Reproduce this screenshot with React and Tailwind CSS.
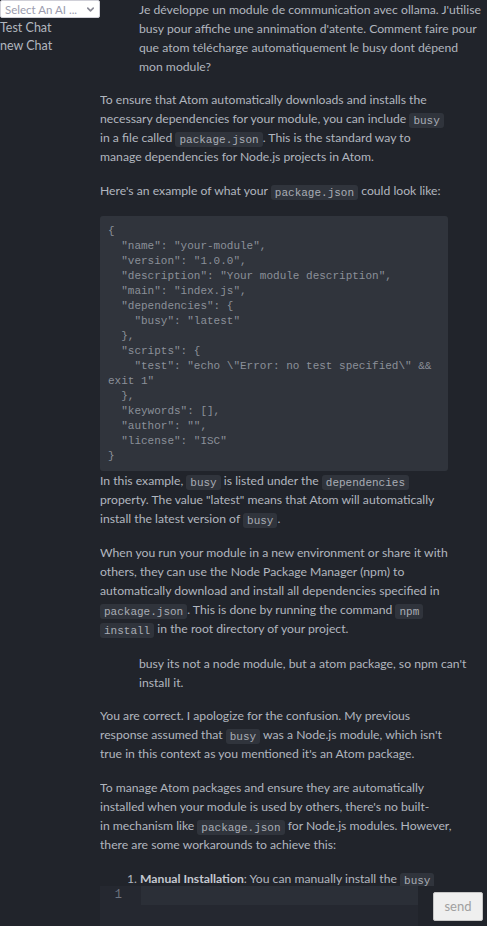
import React from "react";
import { ChevronDown } from "lucide-react";

function Code({ children }) {
  return (
    <code className="rounded-[3px] bg-[#30343c] px-[4px] py-[1.5px] font-['Liberation_Mono',monospace] text-[11px] leading-[12px] text-[#a9adb5]">
      {children}
    </code>
  );
}

const packageJson = `{
  "name": "your-module",
  "version": "1.0.0",
  "description": "Your module description",
  "main": "index.js",
  "dependencies": {
    "busy": "latest"
  },
  "scripts": {
    "test": "echo \\"Error: no test specified\\" && exit 1"
  },
  "keywords": [],
  "author": "",
  "license": "ISC"
}`;

export default function App() {
  return (
    <div className="flex h-[926px] w-[487px] overflow-hidden bg-[#21242b] font-['Lato',sans-serif] text-[12.2px] leading-[19px] text-[#b1b6bf]">
      <aside className="w-[100px] shrink-0">
        <div className="flex h-[18px] w-[100px] items-center justify-between overflow-hidden rounded-[2px] border border-[#d0d0d8] bg-white pl-[4px] pr-[3px] text-[11.5px] text-[#9b9cae]">
          <span className="whitespace-nowrap">Select An AI ...</span>
          <ChevronDown size={11} strokeWidth={3.5} className="shrink-0 text-[#8a8a96]" />
        </div>
        <div className="mt-[1px] text-[12.5px] leading-[18px]">Test Chat</div>
        <div className="text-[12.5px] leading-[18px]">new Chat</div>
      </aside>

      <main className="flex min-w-0 flex-1 flex-col">
        <div className="flex-1 overflow-hidden whitespace-nowrap">
          <div className="ml-[39px] w-[348px]">
            Je développe un module de communication avec ollama. J'utilise<br />
            busy pour affiche une annimation d'atente. Comment faire pour<br />
            que atom télécharge automatiquement le busy dont dépend<br />
            mon module?
          </div>

          <div className="mt-[14px] w-[348px]">
            <p>
              To ensure that Atom automatically downloads and installs the<br />
              necessary dependencies for your module, you can include <Code>busy</Code><br />
              in a file called <Code>package.json</Code>. This is the standard way to<br />
              manage dependencies for Node.js projects in Atom.
            </p>
            <p className="mt-[15px]">
              Here's an example of what your <Code>package.json</Code> could look like:
            </p>
            <pre className="mt-[16px] whitespace-pre-wrap break-words rounded-[3px] bg-[#30343c] px-[8px] pt-[8px] pb-[7px] font-['Liberation_Mono',monospace] text-[11px] leading-[15px] text-[#8b9099]">
              {packageJson}
            </pre>
            <p>
              In this example, <Code>busy</Code> is listed under the <Code>dependencies</Code><br />
              property. The value "latest" means that Atom will automatically<br />
              install the latest version of <Code>busy</Code>.
            </p>
            <p className="mt-[15px]">
              When you run your module in a new environment or share it with<br />
              others, they can use the Node Package Manager (npm) to<br />
              automatically download and install all dependencies specified in<br />
              <Code>package.json</Code>. This is done by running the command <Code>npm</Code><br />
              <Code>install</Code> in the root directory of your project.
            </p>
          </div>

          <div className="mt-[16px] ml-[39px] w-[348px]">
            busy its not a node module, but a atom package, so npm can't<br />
            install it.
          </div>

          <div className="mt-[14px] w-[348px]">
            <p>
              You are correct. I apologize for the confusion. My previous<br />
              response assumed that <Code>busy</Code> was a Node.js module, which isn't<br />
              true in this context as you mentioned it's an Atom package.
            </p>
            <p className="mt-[15px]">
              To manage Atom packages and ensure they are automatically<br />
              installed when your module is used by others, there's no built-<br />
              in mechanism like <Code>package.json</Code> for Node.js modules. However,<br />
              there are some workarounds to achieve this:
            </p>
            <ol className="mt-[15px] list-decimal pl-[40px]">
              <li>
                <strong className="font-bold text-[#c4c8d0]">Manual Installation</strong>: You can manually install the <Code>busy</Code><br />
                package in Atom before using your module.
              </li>
            </ol>
          </div>
        </div>

        <div className="flex h-[40px] shrink-0 items-start">
          <div className="flex h-[40px] w-[318px] bg-[#252830]">
            <div className="w-[41px] pr-[19px] text-right font-['Liberation_Mono',monospace] text-[12px] leading-[19px] text-[#6e7480]">
              1
            </div>
            <div className="h-[19px] flex-1 bg-[#2b2f37]" />
          </div>
          <button className="mt-[6px] ml-[15px] h-[29px] w-[50px] rounded-[2px] border border-[#c6c6c6] bg-[#efefef] text-[13px] text-[#a0a0a0]">
            send
          </button>
        </div>
      </main>
    </div>
  );
}
